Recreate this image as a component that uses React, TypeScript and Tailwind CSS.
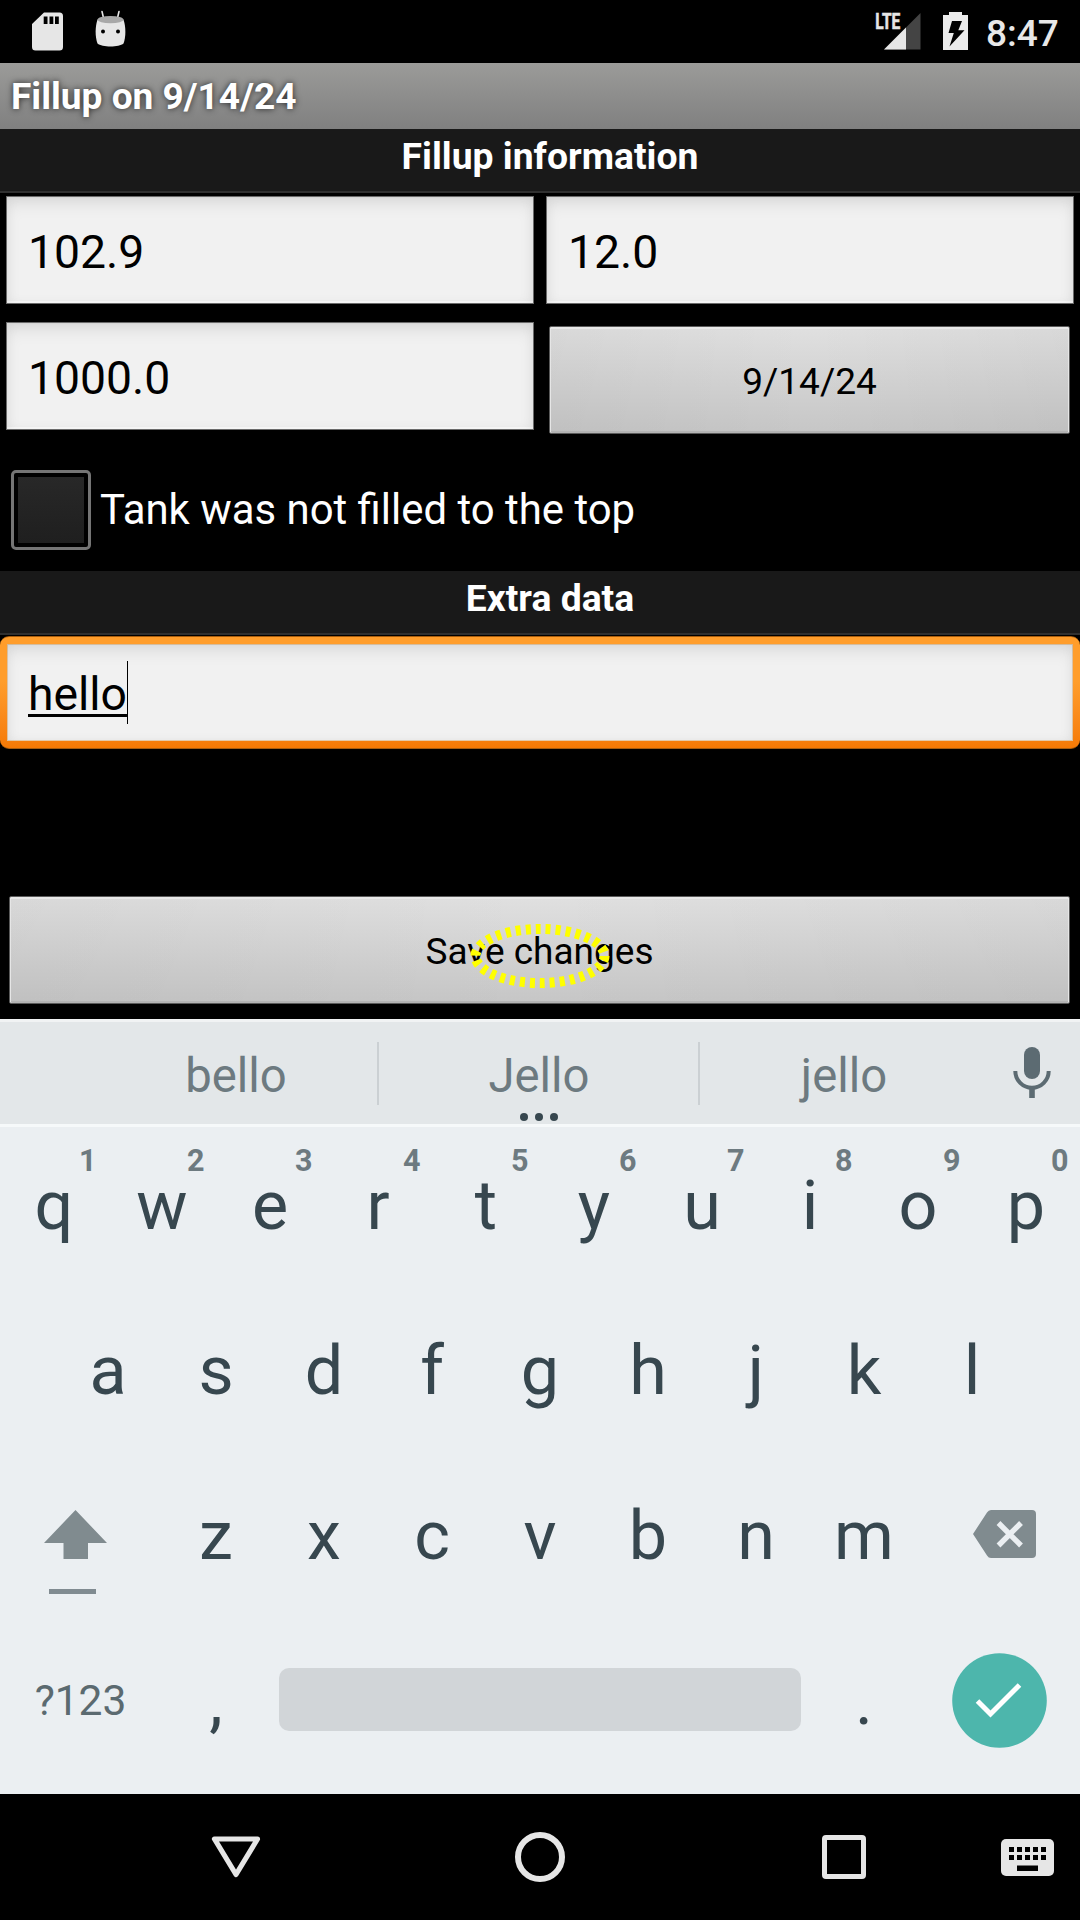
import React from "react";

const fieldBox =
  "flex h-[108px] items-center border border-[#6b6b6b] bg-[#f1f1f1] pl-[21px] pt-[5px] text-[46.3px] leading-none text-black shadow-[inset_0_1px_0_#d6d6d6,inset_0_9px_18px_-4px_rgba(0,0,0,0.1),inset_0_0_12px_rgba(0,0,0,0.05),inset_0_-2px_0_#fbfbfb]";

const buttonBox =
  "flex h-[108px] items-center justify-center rounded-[2px] border border-[#5a5a5a] bg-[linear-gradient(to_right,rgba(0,0,0,0.03),transparent_50%,rgba(0,0,0,0.03)),linear-gradient(to_bottom,#e0e0e0,#c6c6c6)] pt-[3px] text-[37px] leading-none text-black shadow-[inset_0_2px_0_#e8e8e8,inset_1px_0_0_#e6e6e6,inset_-1px_0_0_#e6e6e6,inset_0_-2px_0_#b4b4b4]";

function SectionHeader({ children }: { children: React.ReactNode }) {
  return (
    <div className="h-[64px] border-b-2 border-[#303030] bg-[#191919] pl-[20px] text-center text-[37.3px] leading-[55px] font-bold text-white">
      {children}
    </div>
  );
}

function StatusBar() {
  return (
    <div className="flex h-[63px] items-start bg-black">
      <svg className="ml-[32px] mt-[12px] h-[39px] w-[31px]" viewBox="0 0 31 39">
        <path d="M12 0.5H27.5A3.5 3.5 0 0 1 31 4V35A3.5 3.5 0 0 1 27.5 38.5H3.5A3.5 3.5 0 0 1 0 35V12Z" fill="#e6e6e6" />
        <path d="M11.7 4.5h3.8v7.5h-3.8zM17.5 4.5h3.8v7.5h-3.8zM23 4.5h3.8v7.5H23z" fill="#000" />
      </svg>
      <svg className="ml-[32px] mt-[10px] h-[38px] w-[31px]" viewBox="0 0 31 38">
        <path d="M7 1.5L9 10M24 1.5L22 10" stroke="#e6e6e6" strokeWidth="1.6" strokeLinecap="round" />
        <path d="M2.5 9.5C0 17 0 27 2.5 33.5C7 37.5 24 37.5 28.5 33.5C31 27 31 17 28.5 9.5Z" fill="#e6e6e6" />
        <ellipse cx="15.5" cy="9.6" rx="13" ry="3.7" fill="#a8a8a8" />
        <circle cx="8" cy="21.5" r="2" fill="#000" />
        <circle cx="23" cy="21.5" r="2" fill="#000" />
      </svg>
      <svg className="ml-auto mt-[2px] h-[48px] w-[46px] overflow-visible" viewBox="0 -10 46 48">
        <path d="M45.5 1V37.5H9Z" fill="#444" />
        <path d="M31 15.5V37.5H9Z" fill="#e6e6e6" />
        <text x="0.3" y="17" fill="#e6e6e6" stroke="#e6e6e6" strokeWidth="0.6" fontFamily="Roboto, sans-serif" fontWeight="700" fontSize="22" textLength="25" lengthAdjust="spacingAndGlyphs">LTE</text>
      </svg>
      <svg className="ml-[22px] mt-[12px] h-[38px] w-[25px]" viewBox="0 0 25 38">
        <path d="M6 0H19V3H25V38H0V3H6Z" fill="#ebebeb" />
        <path d="M9 9H19L15.3 18.3H21.5L6.5 34.5L10.8 21H5.5Z" fill="#000" />
      </svg>
      <div className="ml-[18px] w-[94px] text-[37px] leading-[67px] font-medium text-[#e8e8e8]">8:47</div>
    </div>
  );
}

function ClickMarker() {
  return (
    <svg className="absolute left-[470px] top-[923px] h-[66px] w-[140px]" viewBox="0 0 140 66">
      <ellipse cx="70" cy="33" rx="64.5" ry="27" fill="none" stroke="#ff0" strokeWidth="10" strokeDasharray="5 5" />
    </svg>
  );
}

function Suggestion({ children, more }: { children: string; more?: boolean }) {
  return (
    <div className="relative w-[300px] text-center text-[47.25px] leading-[108px] text-[#6d7a80]">
      {children}
      {more && (
        <div className="absolute inset-x-0 bottom-[9px] flex justify-center gap-[7px]">
          <i className="size-[8px] rounded-full bg-[#37474f]" />
          <i className="size-[8px] rounded-full bg-[#37474f]" />
          <i className="size-[8px] rounded-full bg-[#37474f]" />
        </div>
      )}
    </div>
  );
}

function Key({ label, hint }: { label: string; hint?: string }) {
  return (
    <div className="relative w-[108px] text-center text-[68.25px] text-[#37474f]">
      {label}
      {hint && (
        <span className="absolute right-[11.5px] top-[14px] text-[30.5px] leading-[40px] font-bold text-[#6d7a80]">
          {hint}
        </span>
      )}
    </div>
  );
}

function Keyboard() {
  return (
    <div className="flex h-[775px] flex-col bg-[#ebeff2]">
      <div className="flex h-[105px] items-start border-t-[3px] border-[#f1f3f4] bg-[#e3e7e9] pl-[86px]">
        <Suggestion>bello</Suggestion>
        <div className="-ml-[9px] mt-[20px] h-[63px] w-[2px] bg-[#cbd0d3]" />
        <div className="ml-[10px] flex">
          <Suggestion more>Jello</Suggestion>
        </div>
        <div className="ml-[9px] mt-[20px] h-[63px] w-[2px] bg-[#cbd0d3]" />
        <div className="-ml-[6px]">
          <Suggestion>jello</Suggestion>
        </div>
        <svg className="ml-[19px] mt-[25px] h-[51px] w-[38px]" viewBox="0 0 38 51">
          <rect x="11" y="0" width="16" height="32" rx="8" fill="#5c6b72" />
          <path d="M2.3 24A16.7 16.7 0 0 0 35.700 24" stroke="#5c6b72" strokeWidth="4" fill="none" />
          <rect x="16.200" y="40" width="5.600" height="11" fill="#5c6b72" />
        </svg>
      </div>
      <div className="h-[3px] bg-[#f6f9fa]" />
      <div className="flex h-[162px] leading-[158px]">
        {"qwertyuiop".split("").map((c, i) => (
          <Key key={c} label={c} hint={"1234567890"[i]} />
        ))}
      </div>
      <div className="flex h-[165px] justify-center leading-[165px]">
        {"asdfghjkl".split("").map((c) => (
          <Key key={c} label={c} />
        ))}
      </div>
      <div className="flex h-[165px] leading-[165px]">
        <div className="flex w-[162px] flex-col pl-[44px] pt-[56px]">
          <svg className="h-[49px] w-[63px]" viewBox="0 0 63 49">
            <path d="M31.500 0L63 33H44V49H19.500V33H0Z" fill="#808b8f" />
          </svg>
          <div className="ml-[5px] mt-[30px] h-[5px] w-[47px] bg-[#808b91]" />
        </div>
        {"zxcvbnm".split("").map((c) => (
          <Key key={c} label={c} />
        ))}
        <svg className="ml-[55px] mt-[56px] h-[48px] w-[63px]" viewBox="0 0 63 48">
          <path d="M18 0H59A4 4 0 0 1 63 4V44A4 4 0 0 1 59 48H18Q15.500 48 14 45.500L0 24L14 2.500Q15.500 0 18 0Z" fill="#808b8f" />
          <path d="M25.500 13L48 35.500M48 13L25.500 35.500" stroke="#ebeff2" strokeWidth="5.400" />
        </svg>
      </div>
      <div className="flex grow items-start leading-[165px]">
        <div className="w-[161px] text-center text-[42.500px] leading-[164px] text-[#5b6a70]">?123</div>
        <div className="ml-px">
          <Key label="," />
        </div>
        <div className="ml-[9px] mt-[49px] h-[63px] w-[522px] rounded-[10px] bg-[#d1d5d8]" />
        <div className="ml-[9px]">
          <Key label="." />
        </div>
        <svg className="ml-[33.500px] mt-[33.500px] size-[95px]" viewBox="0 0 95 95">
          <circle cx="47.500" cy="47.500" r="47.300" fill="#4db6ac" />
          <path d="M25.500 48L38.500 61L67.500 32" stroke="#fff" strokeWidth="5" fill="none" />
        </svg>
      </div>
    </div>
  );
}

function NavBar() {
  return (
    <div className="flex h-[126px] items-start bg-black">
      <svg className="ml-[211px] mt-[41px] h-[45px] w-[50px]" viewBox="0 0 50 45">
        <path d="M3.500 4H46.500L25 39.500Z" stroke="#e6e6e6" strokeWidth="5.200" strokeLinejoin="round" fill="none" />
      </svg>
      <div className="ml-[254px] mt-[38px] size-[50px] rounded-full border-[6px] border-[#e6e6e6]" />
      <div className="ml-[257px] mt-[41px] size-[44px] rounded-[4px] border-[5px] border-[#e6e6e6]" />
      <svg className="ml-[135px] mt-[45px] h-[37px] w-[53px]" viewBox="0 0 53 37">
        <rect width="53" height="37" rx="5" fill="#e6e6e6" />
        {[8, 16].map((y) =>
          [8, 16, 24, 32, 40].map((x) => <rect key={x + "-" + y} x={x} y={y} width="5" height="5" fill="#000" />)
        )}
        <rect x="16" y="26.500" width="21" height="5.500" fill="#000" />
      </svg>
    </div>
  );
}

export default function App() {
  return (
    <div className="relative flex h-[1920px] w-[1080px] flex-col overflow-hidden bg-black font-['Roboto',sans-serif]">
      <StatusBar />
      <div className="h-[66px] bg-linear-to-b from-[#9b9b99] to-[#808080] pl-[11px] text-[37.1px] leading-[67px] font-bold text-white [text-shadow:0_0_6px_rgba(0,0,0,0.75)]">
        Fillup on 9/14/24
      </div>
      <SectionHeader>Fillup information</SectionHeader>
      <div className="mt-[3px] grid grid-cols-[528px_528px] gap-x-[12px] gap-y-[18px] pl-[6px]">
        <div className={fieldBox}>102.9</div>
        <div className={fieldBox}>12.0</div>
        <div className={fieldBox}>1000.0</div>
        <div className="mt-[4px] mr-[4px] ml-[3px]">
          <div className={buttonBox}>9/14/24</div>
        </div>
      </div>
      <div className="mt-[36px] flex h-[80px] items-center gap-[9px] pl-[11px]">
        <div className="flex size-[80px] rounded-[5px] border-[3px] border-[#757575] bg-black p-[4px]">
          <div className="grow bg-linear-to-b from-[#282828] to-[#1f1f1f]" />
        </div>
        <span className="text-[41.9px] leading-[80px] text-white">Tank was not filled to the top</span>
      </div>
      <div className="mt-[21px]">
        <SectionHeader>Extra data</SectionHeader>
      </div>
      <div className="mt-px h-[113px] rounded-[9px] border-y border-[#a85c0c] bg-linear-to-b from-[#ff9d2b] from-40% to-[#f57a05] px-[7px] py-[7px]">
        <div className="flex h-[97px] items-center bg-[#f1f1f1] pl-[21px] text-[46.3px] text-black shadow-[inset_0_9px_18px_-4px_rgba(0,0,0,0.1),inset_0_0_12px_rgba(0,0,0,0.05),inset_0_0_0_1px_#e9cfae]">
          <span className="pt-[5px] underline decoration-[3px] underline-offset-[4px] [text-decoration-skip-ink:none]">hello</span>
          <span className="h-[63px] w-px bg-black" />
        </div>
      </div>
      <div className="mt-[147px] pr-[10px] pl-[9px]">
        <div className={buttonBox}>Save changes</div>
      </div>
      <div className="mt-[15px]">
        <Keyboard />
      </div>
      <NavBar />
      <ClickMarker />
    </div>
  );
}
